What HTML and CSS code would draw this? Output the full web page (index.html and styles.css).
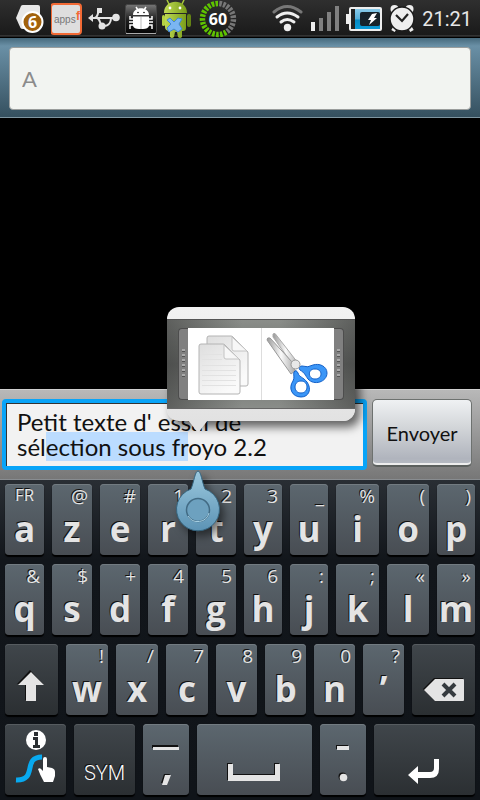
FILE: index.html
```html
<!DOCTYPE html>
<html lang="fr">
<head>
<meta charset="utf-8">
<meta name="viewport" content="width=device-width, initial-scale=1">
<title>Message</title>
<link rel="stylesheet" href="styles.css">
</head>
<body>
<header class="status">
  <div class="status-left">
    <svg width="32" height="38" viewBox="14 0 32 38" aria-hidden="true">
      <path d="M16 18 21 6q.5-1 2-1h15q2 0 2 2v22H23q-2 0-2.500-1Z" fill="#e8e8e8"/>
      <circle cx="32.500" cy="22" r="10" fill="#a2620c" stroke="#fff" stroke-width="2"/>
      <text x="32.500" y="28" class="badge-num">6</text>
    </svg>
    <svg width="32" height="38" viewBox="51 0 32 38" aria-hidden="true">
      <rect x="51" y="4" width="30" height="30" rx="3" fill="#dedede" stroke="#f26a35" stroke-width="2"/>
      <text x="54" y="23" class="apps">apps</text><text x="76" y="20" class="apps-f">f</text>
    </svg>
    <svg width="32" height="38" viewBox="88 0 32 38" aria-hidden="true">
      <g fill="none" stroke="#e4e4e4" stroke-width="2"><path d="M91 18h25M94 18c5 0 3-7 6-8M97 18c4 1 2 8 7 8 5 0 7-4 7-8"/></g>
      <g fill="#e4e4e4"><path d="m88 18 5-4v8Z"/><circle cx="116" cy="17.500" r="3.800"/><rect x="97" y="8" width="5" height="5"/><circle cx="102" cy="26" r="3.500"/></g>
    </svg>
    <svg width="32" height="38" viewBox="126 0 32 38" aria-hidden="true">
      <defs><linearGradient id="dbg" x2="0" y2="1"><stop stop-color="#777"/><stop offset=".5" stop-color="#222"/><stop offset="1" stop-color="#050505"/></linearGradient></defs>
      <rect x="126.500" y="4.500" width="31" height="29" rx="2" fill="url(#dbg)" stroke="#444"/>
      <path d="M127 33.500h30" stroke="#aaa"/>
      <g fill="none" stroke="#fff" stroke-width="1.500"><path d="m137 7 2 3m8-3-2 3M135 19h-4v-3m4 6h-5m5 3h-4v4m18-10h4v-3m-4 6h5m-5 3h4v4"/></g>
      <path d="M134 15c0-9 16-9 16 0Zm0 1.500h16V26q-1 3-6 3h-4q-5 0-6-3Z" fill="#fff"/>
      <path d="M142 17v12" stroke="#bbb"/><circle cx="139" cy="12.500" r=".8"/><circle cx="145" cy="12.500" r=".8"/>
    </svg>
    <svg width="32" height="38" viewBox="162 0 32 38" aria-hidden="true">
      <defs><linearGradient id="dr" x2="1" y2="0"><stop stop-color="#c1dc55"/><stop offset="1" stop-color="#789b18"/></linearGradient></defs>
      <path d="m167 0 2 4m15-4-2 4" stroke="#a8c93c" stroke-width="1.500"/>
      <path d="M164 13c0-15 23-15 23 0ZM165 14h21v14q0 3-3 3h-1v6q-2 2-4 0l-1-5h-2l-1 5q-2 2-4 0v-6q-5 0-5-4Z" fill="url(#dr)"/>
      <rect x="187" y="14" width="4" height="13" rx="2" fill="#648314"/><rect x="162" y="15" width="3" height="11" rx="1.500" fill="#b5d342"/>
      <circle cx="170" cy="8" r="1.400" fill="#fff"/><circle cx="180" cy="8" r="1.400" fill="#fff"/>
      <path d="m167 20 3-2 4 4 4-4 4 1-3 5 3 5-4 3-4-3-5 3-2-4 4-4Z" fill="#7bb6f2" stroke="#4288d4"/>
    </svg>
    <svg width="38" height="38" viewBox="199 0 38 38" role="img" aria-label="60">
      <g fill="none" stroke-width="5.500"><path d="M218 3.500A15.500 15.500 0 0 1 227.100 31.500" pathLength="48" stroke="#777" stroke-dasharray="3.200 1.600" stroke-dashoffset="-1.600"/>
      <path d="M227.100 31.500A15.500 15.500 0 1 1 218 3.500" pathLength="72" stroke="#5fc400" stroke-dasharray="3.200 1.600" stroke-dashoffset="-1.600"/></g>
      <text x="218" y="25" class="ring-num">60</text>
    </svg>
  </div>
  <div class="status-right">
    <svg width="32" height="38" viewBox="272 0 32 38" aria-hidden="true">
      <g fill="none" stroke-width="3" stroke-linecap="round"><path d="M275 12q13-11 27 0" stroke="#777"/><path d="M278 17q10-8 21 0M282 22q6-5 13 0" stroke="#eee"/></g><circle cx="288.500" cy="27.500" r="3.700" fill="#eee"/>
    </svg>
    <svg width="29" height="38" viewBox="312 0 29 38" aria-hidden="true"><path d="M313 22h4v9h-4Z" fill="#eee"/><path d="M321 18h4v13h-4Zm8-6h4v19h-4Zm8-6h4v25h-4Z" fill="#808080"/></svg>
    <svg width="36" height="38" viewBox="347 0 36 38" aria-hidden="true">
      <defs><linearGradient id="bt" x2="0" y2="1"><stop stop-color="#8acbea"/><stop offset=".5" stop-color="#55aed8"/><stop offset=".55" stop-color="#078ac2"/><stop offset="1" stop-color="#0b9bd8"/></linearGradient></defs>
      <path d="M347 14h3V9q0-2 2-2h29q2 0 2 2v20q0 2-2 2h-29q-2 0-2-2v-5h-3Z" fill="#eee"/><path d="M352 9h29v20h-29Z" fill="#222"/><path d="M356 9h25v20h-25Z" fill="url(#bt)"/><rect x="361" y="12" width="20" height="14" rx="2" fill="#17232b"/><path d="m373 14 5-1-3 5h3l-8 7 2-5h-3Z" fill="#fff"/>
    </svg>
    <svg width="26" height="38" viewBox="390 0 26 38" aria-hidden="true">
      <path d="m397 26-3 5m16-5 3 5" stroke="#eee" stroke-width="4"/><circle cx="395.500" cy="9" r="4" fill="#eee"/><circle cx="410.500" cy="9" r="4" fill="#eee"/><circle cx="403" cy="19" r="12" fill="#eee" stroke="#1b1b1b" stroke-width="1.500"/><path d="m397 15 6 6 6-7" fill="none" stroke="#222" stroke-width="2.200"/>
    </svg>
    <time class="clock">21:21</time>
  </div>
</header>

<div class="recipient"><input class="recipient-input" type="text" placeholder="A" aria-label="Destinataire"></div>
<main class="thread"></main>

<form class="composer">
  <textarea class="message" id="message" aria-label="Message" rows="2" spellcheck="false">Petit texte d' essai de
sélection sous froyo 2.2</textarea>
  <button class="send" type="button">Envoyer</button>

  <div class="popup" role="toolbar" aria-label="Sélection">
    <div class="popup-frame">
      <span class="grip"></span>
      <button class="tool" type="button" aria-label="Copier">
        <svg width="62" height="72" viewBox="194 328 62 72" aria-hidden="true">
          <defs><linearGradient id="pg" x2=".6" y2="1"><stop stop-color="#dedede"/><stop offset=".6" stop-color="#efefef"/><stop offset="1" stop-color="#fafafa"/></linearGradient></defs>
          <path d="M210 336h22q1 0 2 1l14 14q1 1 1 2v31q0 2-2 2h-37q-2 0-2-2v-46q0-2 2-2Z" fill="url(#pg)" stroke="#b4b4b4"/>
          <path d="M233 337v12q0 2 2 2h13Z" fill="#f7f7f7" stroke="#c4c4c4"/>
          <path d="M202 344h22q1 0 2 1l14 14q1 1 1 2v31q0 2-2 2h-37q-2 0-2-2v-46q0-2 2-2Z" fill="url(#pg)" stroke="#b4b4b4"/>
          <path d="M203 354.500h20m-20 5h20m-20 6h34m-34 5h34m-34 5h34m-34 5h34m-34 5h34" stroke="#e2e2e2"/>
          <path d="M225 345v12q0 2 2 2h13Z" fill="#f7f7f7" stroke="#c4c4c4"/>
        </svg>
      </button>
      <button class="tool tool-cut" type="button" aria-label="Couper">
        <svg width="66" height="72" viewBox="265 328 66 72" aria-hidden="true">
          <defs><linearGradient id="bl" x2="1" y2="0"><stop stop-color="#999"/><stop offset=".5" stop-color="#fafafa"/><stop offset="1" stop-color="#aaa"/></linearGradient></defs>
          <path d="M273 334q2-2 4 2l21 27q2 4-2 6l-23-32Z" fill="url(#bl)" stroke="#aaa"/>
          <path d="M267 340q0-3 3-2l23 25 2 8-4 3Z" fill="url(#bl)" stroke="#999"/>
          <path fill-rule="evenodd" d="M302 366q6 2 11-1c6-2 14 1 14 8 0 9-13 13-19 6-3-4-3-6-8-9-2-2 0-4 2-4Zm13 3c-8 0-7 10 0 10 8 0 8-10 0-10Z" fill="#3b96f7" stroke="#1260c8"/>
          <path fill-rule="evenodd" d="M294 372q2-3 4 1c1 4 5 4 9 9 5 7 2 15-6 15-9 0-13-9-8-16 2-4 0-6 1-9Zm7 9c-8 0-8 12 0 12s8-12 0-12Z" fill="#3b96f7" stroke="#1260c8"/>
          <circle cx="295.500" cy="364.500" r="4.500" fill="#e8e8e8" stroke="#999"/>
        </svg>
      </button>
      <span class="grip"></span>
    </div>
    <svg class="popup-tail" width="20" height="14" viewBox="0 0 20 14" aria-hidden="true"><path d="M0 0h20L10 13Z" fill="#e2e2e2"/></svg>
  </div>

  <svg class="handle" width="64" height="76" viewBox="0 0 64 76" aria-hidden="true">
    <defs><linearGradient id="hd" x2="0" y2="1"><stop stop-color="#9cc9de"/><stop offset="1" stop-color="#5c93b5"/></linearGradient></defs>
    <path d="M30 1c3 0 4 11 7 18a21.500 21.500 0 1 1-14 0c3-7 4-18 7-18Z" fill="url(#hd)" stroke="#35647e"/>
    <circle cx="30" cy="40" r="11.500" fill="#6da1bf" stroke="#426b84" stroke-width="1.500"/>
    <path d="M20 46a11.500 11.500 0 0 0 21-3" fill="none" stroke="#a7d0e3"/>
  </svg>
</form>

<section class="keyboard" aria-label="Clavier">
  <div class="row row-1">
    <button class="key" type="button"><span class="alt alt-lang">FR</span><span class="main">a</span></button>
    <button class="key" type="button"><span class="alt">@</span><span class="main">z</span></button>
    <button class="key" type="button"><span class="alt">#</span><span class="main">e</span></button>
    <button class="key" type="button"><span class="alt">1</span><span class="main">r</span></button>
    <button class="key" type="button"><span class="alt">2</span><span class="main">t</span></button>
    <button class="key" type="button"><span class="alt">3</span><span class="main">y</span></button>
    <button class="key" type="button"><span class="alt">_</span><span class="main">u</span></button>
    <button class="key" type="button"><span class="alt">%</span><span class="main">i</span></button>
    <button class="key" type="button"><span class="alt">(</span><span class="main">o</span></button>
    <button class="key" type="button"><span class="alt">)</span><span class="main">p</span></button>
  </div>
  <div class="row row-1">
    <button class="key" type="button"><span class="alt">&amp;</span><span class="main">q</span></button>
    <button class="key" type="button"><span class="alt">$</span><span class="main">s</span></button>
    <button class="key" type="button"><span class="alt">+</span><span class="main">d</span></button>
    <button class="key" type="button"><span class="alt">4</span><span class="main">f</span></button>
    <button class="key" type="button"><span class="alt">5</span><span class="main">g</span></button>
    <button class="key" type="button"><span class="alt">6</span><span class="main">h</span></button>
    <button class="key" type="button"><span class="alt">:</span><span class="main">j</span></button>
    <button class="key" type="button"><span class="alt">;</span><span class="main">k</span></button>
    <button class="key" type="button"><span class="alt">«</span><span class="main">l</span></button>
    <button class="key" type="button"><span class="alt">»</span><span class="main">m</span></button>
  </div>
  <div class="row row-3">
    <button class="key key-dark" type="button" aria-label="Majuscule"><svg width="53" height="71" viewBox="5 644 53 71" aria-hidden="true"><path d="m31 671 13 14h-8v16H26v-16h-8Z" fill="#111" transform="translate(-1 -1)"/><path d="m31 672 13 13h-8v16H26v-16h-8Z" fill="#e4e4e4"/></svg></button>
    <button class="key" type="button"><span class="alt">!</span><span class="main">w</span></button>
    <button class="key" type="button"><span class="alt">/</span><span class="main">x</span></button>
    <button class="key" type="button"><span class="alt">7</span><span class="main">c</span></button>
    <button class="key" type="button"><span class="alt">8</span><span class="main">v</span></button>
    <button class="key" type="button"><span class="alt">9</span><span class="main">b</span></button>
    <button class="key" type="button"><span class="alt">0</span><span class="main">n</span></button>
    <button class="key" type="button"><span class="alt">?</span><span class="main">’</span></button>
    <button class="key key-dark" type="button" aria-label="Effacer"><svg width="63" height="71" viewBox="412 644 63 71" aria-hidden="true"><path d="m423 689 11-11h29v22h-29Z" fill="#111"/><path d="m424 690 11-11h28q1 0 1 1v20q0 1-1 1h-28Z" fill="#e4e4e4"/><path d="m443 684 12 12m0-12-12 12" stroke="#363b3f" stroke-width="4"/></svg></button>
  </div>
  <div class="row row-4">
    <button class="key key-dark" type="button" aria-label="Swype"><svg width="61" height="71" viewBox="5 724 61 71" aria-hidden="true">
      <circle cx="36" cy="740" r="10" fill="#fff"/><path d="M34 732h4v4h-4Zm-1 5h5v8h2v3h-7v-3h2v-5h-2Z" fill="#2b2f32"/>
      <path d="M16 780c22 1 6-23 26-23" fill="none" stroke="#08a9ef" stroke-width="5"/>
      <path d="M43 759q0-2 2-2t2 2v8l5 1q3 1 3 4v4q-1 3-2 6h-9q-4-7-6-13 2-2 4 1l1 1Z" fill="#fff"/></svg></button>
    <button class="key key-dark key-sym" type="button">SYM</button>
    <button class="key" type="button" aria-label="Virgule"><svg width="46" height="71" viewBox="143 724 46 71" aria-hidden="true"><path d="M152 745h26v3h-26Zm12 29h6l-4 9h-5Z" fill="#111"/><path d="M153 747h26v3h-26Zm12 28h6l-4 10h-5Z" fill="#e4e4e4"/></svg></button>
    <button class="key" type="button" aria-label="Espace"><svg width="115" height="71" viewBox="197 724 115 71" aria-hidden="true"><path d="M227 763h5v11h42v-11h5v17h-52Z" fill="#111"/><path d="M228 764h5v11h42v-11h5v17h-52Z" fill="#e4e4e4"/></svg></button>
    <button class="key" type="button" aria-label="Point"><svg width="46" height="71" viewBox="320 724 46 71" aria-hidden="true"><path d="M336 745h12v4h-12Z" fill="#111"/><path d="M337 746h12v4h-12Z" fill="#e4e4e4"/><circle cx="342.500" cy="776.500" r="4" fill="#111"/><circle cx="343.500" cy="777.500" r="3.800" fill="#e4e4e4"/></svg></button>
    <button class="key key-dark" type="button" aria-label="Entrée"><svg width="101" height="71" viewBox="374 724 101 71" aria-hidden="true"><path d="m408 775 10-9v6h12q4 0 4-4v-9h5v10q0 9-9 9h-12v6Z" fill="#fff"/></svg></button>
  </div>
</section>
<script src="script.js"></script>
</body>
</html>
```
FILE: styles.css
```css
* { box-sizing: border-box; }
body {
  margin: 0;
  min-height: 100vh;
  display: flex;
  flex-direction: column;
  background: #000;
  font-family: Lato, "Open Sans", sans-serif;
}
button, input, textarea { font-family: inherit; margin: 0; }
svg { display: block; flex: none; }

.status {
  display: flex;
  justify-content: space-between;
  height: 38px;
  padding: 0 8px 0 14px;
  background: linear-gradient(#2f2f2f, #1a1a1a 35px, #4c4c4c 36px, #000 37px);
}
.status-left { display: flex; gap: 5px; }
.status-right { display: flex; gap: 7px; }
.clock { color: #e8e8e8; font-size: 20px; line-height: 38px; font-family: Roboto, sans-serif; font-weight: 400; }
.badge-num, .ring-num { font: bold 16px "Open Sans", sans-serif; fill: #fff; text-anchor: middle; }
.apps { font: 10px "Liberation Sans", sans-serif; fill: #777; }
.apps-f { font: bold 12px "Liberation Sans", sans-serif; fill: #f26a35; }

.recipient {
  padding: 9px 9px 7px;
  background: linear-gradient(#46697c, #6a90a6 8px, #35505f);
  border-bottom: 1px solid #7e95a1;
}
.recipient-input {
  display: block;
  width: 100%;
  height: 63px;
  padding: 0 12px;
  border: 1px solid #9a9d9c;
  border-radius: 4px;
  background: #f2f4f1;
  font-size: 22px;
}
.recipient-input::placeholder { color: #8b8b8b; }

.thread { flex: 1; }

.composer {
  position: relative;
  display: flex;
  align-items: flex-start;
  gap: 5px;
  padding: 9px 8px 9px 2px;
  background: linear-gradient(#b8b8b8, #777);
  border-top: 1px solid #d0d0d0;
  border-bottom: 1px solid #888c90;
}
.message {
  display: block;
  flex: 1;
  min-width: 0;
  height: 71px;
  padding: 6px 11px;
  border: 4px solid #08a4f8;
  border-radius: 4px;
  outline: 0;
  resize: none;
  overflow: hidden;
  background: #f2f2f2;
  box-shadow: inset 1px 1px 0 #333;
  color: #111;
  font-size: 24px;
  line-height: 25px;
}
.message::selection { background: #bbdcff; color: #111; }
.send {
  width: 100px;
  height: 68px;
  padding: 0;
  border: 1px solid #6d716f;
  border-bottom: 2px solid #5c605e;
  border-radius: 5px;
  background: linear-gradient(#eff1f3, #d4d7da 40%, #b0b4bd 90%, #b8bcc4);
  box-shadow: inset 0 -2px 0 #eee;
  color: #111;
  font-size: 20px;
}

.popup {
  position: absolute;
  left: 167px;
  top: -83px;
  width: 188px;
  padding: 12px 0;
  border-radius: 12px;
  background: linear-gradient(#f2f2f2, #e2e2e2);
  box-shadow: 5px 6px 10px rgba(0, 0, 0, .6);
}
.popup-frame {
  display: flex;
  padding: 8px 11px;
  background: linear-gradient(90deg, rgba(40, 40, 40, .45), transparent 40%, transparent 60%, rgba(40, 40, 40, .45)), linear-gradient(#8a8d89, #6c6f6c 50%, #8a8d89);
  border-top: 1px solid #555;
  border-bottom: 1px solid #666;
}
.grip {
  width: 10px;
  padding: 20px 3px;
  border: 1px solid #4d4d4d;
  border-right: 0;
  border-radius: 4px 0 0 4px;
  background: repeating-linear-gradient(#aaa 0 2px, #555 2px 3px, #808080 3px 5px) content-box, #808080;
}
.grip:last-child { border-radius: 0 4px 4px 0; border: 1px solid #4d4d4d; border-left: 0; }
.tool {
  flex: 1;
  padding: 0;
  border: 0;
  background: #fff;
  display: flex;
  align-items: center;
  justify-content: center;
  min-width: 0;
}
.tool-cut { border-left: 1px solid #ddd; }
.popup-tail { position: absolute; left: 21px; top: 113px; }
.handle { position: absolute; left: 168px; top: 80px; z-index: 1; filter: drop-shadow(4px 5px 4px rgba(0, 0, 0, .5)); }

.keyboard {
  display: grid;
  gap: 9px;
  padding: 4px 5px 5px;
  background: linear-gradient(#292e34, #12161b 80px, #101419);
}
.row { display: grid; gap: 8px; }
.row-1 { grid-template-columns: 39fr 40fr 40fr 40fr 40fr 38fr 38fr 43fr 42fr 38fr; }
.row-3 { grid-template-columns: 53fr 42fr 42fr 42fr 41fr 41fr 41fr 41fr 63fr; }
.row-4 { grid-template-columns: 61fr 61fr 46fr 115fr 46fr 101fr; }
.key {
  display: flex;
  flex-direction: column;
  align-items: center;
  min-width: 0;
  height: 71px;
  padding: 0;
  border: 0;
  border-radius: 4px;
  background: linear-gradient(#5c676f, #484d53);
  box-shadow: inset 0 1px 0 #727b81, 0 2px 1px #000;
  color: #e4e4e4;
  font-family: "Open Sans", "Noto Sans", sans-serif;
  text-shadow: -1px -1px 0 #111;
}
.key-dark { background: linear-gradient(#40464b, #2b2f32); box-shadow: inset 0 1px 0 #565b5f, 0 2px 1px #000; }
.alt { align-self: flex-end; padding-right: 4px; font-size: 19px; line-height: 24px; height: 24px; }
.alt-lang { align-self: center; padding: 0; font-family: Roboto, sans-serif; font-size: 16px; }
.main { font-size: 35px; font-weight: 700; line-height: 42px; }
.key-sym { justify-content: flex-end; padding-bottom: 10px; font-family: Roboto, sans-serif; font-size: 20px; font-weight: 300; color: #fff; }
```
FILE: script.js
```js
const message = document.getElementById("message");
const start = message.value.indexOf("ection");
const end = message.value.indexOf("oyo");
message.focus();
message.setSelectionRange(start, end);
```
